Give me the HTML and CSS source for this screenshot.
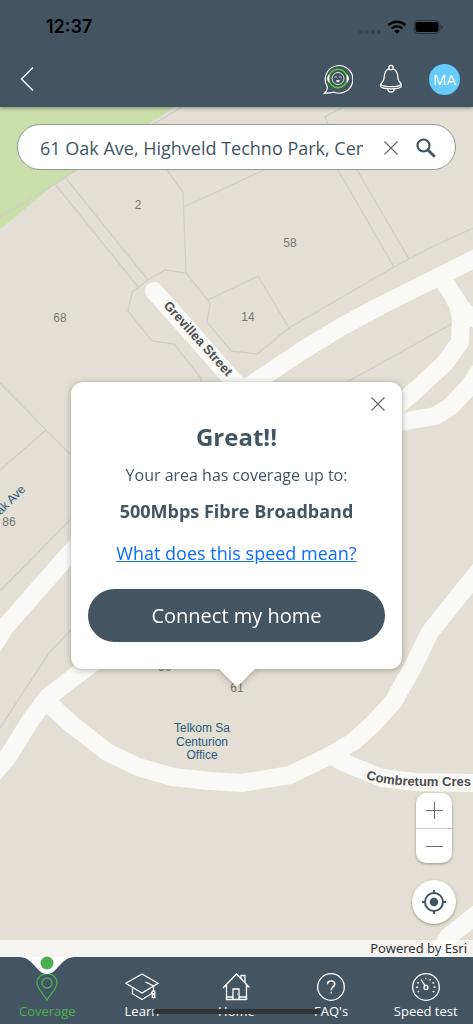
FILE: index.html
```html
<!DOCTYPE html>
<html lang="en">
<head>
    <meta charset="UTF-8">
    <meta name="viewport" content="width=device-width, initial-scale=1.0">
    <title>Coverage</title>
    <link rel="stylesheet" href="styles.css">
</head>
<body>
    <header class="header">
        <div class="status-bar">
            <span class="clock">12:37</span>
            <svg class="status-icons" width="84" height="16" viewBox="0 0 84 16">
                <g fill="#364551">
                    <circle cx="2" cy="13" r="2"/><circle cx="8" cy="13" r="2"/>
                    <circle cx="14" cy="13" r="2"/><circle cx="20" cy="13" r="2"/>
                </g>
                <g fill="none" stroke="#000" stroke-width="2.4">
                    <path d="M29.5 6.2a12.2 12.2 0 0 1 17 0"/>
                    <path d="M32.7 9.5a7.6 7.6 0 0 1 10.6 0"/>
                </g>
                <path d="M35.2 11.9a4.2 4.2 0 0 1 5.6 0L38 14.8z"/>
                <rect x="55" y="1.5" width="26" height="13" rx="4" fill="none" stroke="#2b3740"/>
                <rect x="56.500" y="3" width="23" height="10" rx="2.500"/>
                <path d="M82.300 6v4.500q1.500-.6 1.500-2.200T82.300 6z" fill="#2b3740"/>
            </svg>
        </div>
        <nav class="nav-bar">
            <button class="icon-btn back" aria-label="Back">
                <svg width="14" height="26" viewBox="0 0 14 26" fill="none" stroke="#fff" stroke-width="1.300"><path d="M13 1.500 1.500 13 13 24.500"/></svg>
            </button>
            <button class="icon-btn" aria-label="Chat">
                <svg width="30" height="32" viewBox="0 0 30 32" fill="none" stroke="#fff" stroke-width="1.200">
                    <path d="M4.300 23.600A13.800 13.800 0 1 1 11 29.200Q7 30 1.500 30.300 5 27 4.300 23.600z"/>
                    <circle cx="15" cy="15.500" r="9.200" stroke="#5bd12b" stroke-width="1.500"/>
                    <circle cx="15" cy="15.500" r="6" stroke-width=".8"/>
                    <path d="M5.600 12.700q-1.800 2.800 0 5.600zM24.400 12.700q1.800 2.800 0 5.600z" fill="#fff"/>
                    <path d="M11.500 14.300q1.200-1 2.400 0M16.100 14.300q1.200-1 2.400 0" stroke-width=".7"/>
                    <path d="M13 17.300h4q-.4 2-2 2t-2-2z" fill="#fff" stroke="none"/>
                </svg>
            </button>
            <button class="icon-btn" aria-label="Notifications">
                <svg width="24" height="30" viewBox="0 0 24 30" fill="none" stroke="#fff" stroke-width="1.300">
                    <circle cx="12" cy="3.500" r="2.200"/>
                    <path d="M9.800 4.900C5.500 6 5.300 11 5 14.500 4.700 18 1.500 18.500 1.500 21.500c0 4.500 21 4.500 21 0 0-3-3.200-3.500-3.500-7-.3-3.500-.5-8.500-4.800-9.600"/>
                    <path d="M2 20.300c2 3.200 18 3.200 20 0M8.800 25c.3 4.200 6.100 4.200 6.400 0"/>
                </svg>
            </button>
            <button class="avatar">MA</button>
        </nav>
    </header>

    <main class="map">
        <svg class="map-canvas" viewBox="0 107 473 850" preserveAspectRatio="xMidYMid slice">
            <path class="park" d="M-2 105H178L152 122 75 171 55 184-2 231z"/>
            <!-- parcel boundaries -->
            <g class="parcels">
                <path d="M0 217 55 184 75 171 182 107"/>
                <path d="M55 184 138 287M65 177 148 280"/>
                <path d="M160 160 167 170 183 192 186 273M184 207 262 171 290 158"/>
                <path d="M148 280 165 270 186 273 210 303 207 322 231 351 257 354 289 328 394 267 430 248 473 228"/>
                <path d="M208 300 258 276 289 328"/>
                <path d="M148 280 132 292 128 311 152 341 174 344 201 378 200 390"/>
                <path d="M343 107 325 117 328 124 338 170 394 267M349 155 357 170 409 259"/>
                <path d="M0 383 46 430 90 474M46 430 0 470M71 519 0 591M71 630 49 653 0 728"/>
                <path d="M340 386 473 312"/>
            </g>
            <g class="roads">
                <path d="M154 291 240 388"/>
                <path d="M-6 645 5 627 71 552 200 420 260 379 300 352 341 327 380 306 430 281 480 256"/>
                <path d="M445 283 457 301 461 318 460 342 445 363 417 389 395 408"/>
                <path d="M455 300 466 313 482 323M484 365 468 388 450 407 435 416 395 423"/>
                <path d="M482 567 430 632 413 667 393 702 373 724 353 742 327 757 290 775 242 783 210 781 173 777 138 767 107 752 70 723 46 701"/>
                <path d="M-6 773 7 758 32 718 48 697 83 670 110 650"/>
                <path d="M330 755 345 763 382 778 415 782 480 783"/>
                <path d="M482 910 448 937 434 960"/>
            </g>
            <g class="numbers">
                <text x="138" y="209">2</text>
                <text x="290" y="247">58</text>
                <text x="248" y="321">14</text>
                <text x="60" y="322">68</text>
                <text x="9" y="526">86</text>
                <text x="165" y="671">59</text>
                <text x="237" y="692">61</text>
            </g>
            <g class="places">
                <text x="202" y="732">Telkom Sa</text>
                <text x="202" y="746">Centurion</text>
                <text x="202" y="759">Office</text>
                <text class="place-end" transform="translate(26 490) rotate(-45)">Oak Ave</text>
            </g>
            <path id="grevillea" d="M163 306 242 394" fill="none"/>
            <path id="combretum" d="M366 779Q386 785 416 786L500 786" fill="none"/>
            <g class="streets">
                <text><textPath href="#grevillea">Grevillea Street</textPath></text>
                <text><textPath href="#combretum">Combretum Cres</textPath></text>
            </g>
        </svg>

        <form class="search">
            <input class="search-input" type="text" aria-label="Address" value="61 Oak Ave, Highveld Techno Park, Centurion">
            <button class="icon-btn search-btn" type="reset" aria-label="Clear">
                <svg width="14" height="14" viewBox="0 0 14 14" stroke="#666" stroke-width="1.100"><path d="M.5.5l13 13M13.500.5l-13 13"/></svg>
            </button>
            <button class="icon-btn search-btn" type="submit" aria-label="Search">
                <svg width="20" height="20" viewBox="0 0 20 20" fill="none" stroke="#435563"><circle cx="7.500" cy="7.500" r="6" stroke-width="2.200"/><path d="M12 12l6.800 6.800" stroke-width="2.800"/></svg>
            </button>
        </form>

        <section class="popup">
            <button class="icon-btn popup-close" aria-label="Close">
                <svg width="14" height="14" viewBox="0 0 14 14" stroke="#666" stroke-width="1.100"><path d="M.5.5l13 13M13.500.5l-13 13"/></svg>
            </button>
            <h1 class="popup-title">Great!!</h1>
            <p class="popup-text">Your area has coverage up to:</p>
            <p class="popup-speed">500Mbps Fibre Broadband</p>
            <a class="popup-link" href="#">What does this speed mean?</a>
            <button class="connect">Connect my home</button>
        </section>

        <div class="controls">
            <div class="zoom">
                <button class="icon-btn zoom-btn" aria-label="Zoom in">
                    <svg width="17" height="17" viewBox="0 0 17 17" stroke="#6e6e6e"><path d="M0 8.500h17M8.500 0v17"/></svg>
                </button>
                <button class="icon-btn zoom-btn" aria-label="Zoom out">
                    <svg width="17" height="17" viewBox="0 0 17 17" stroke="#6e6e6e"><path d="M0 8.500h17"/></svg>
                </button>
            </div>
            <button class="icon-btn locate" aria-label="My location">
                <svg width="24" height="24" viewBox="0 0 24 24" fill="none" stroke="#435563" stroke-width="2">
                    <circle cx="12" cy="12" r="9"/><circle cx="12" cy="12" r="4.300" fill="#435563" stroke="none"/>
                    <path d="M12 0v4M12 20v4M0 12h4M20 12h4"/>
                </svg>
            </button>
        </div>
        <div class="attribution">Powered by Esri</div>
    </main>

    <nav class="tabs">
        <a class="tab active" href="#">
            <svg class="notch" width="56" height="24" viewBox="0 0 56 24">
                <path d="M0 6H56C41 6 39 23 28 23S15 6 0 6z" fill="#fff"/>
                <circle cx="28" cy="12" r="6.500" fill="#4caf50"/>
            </svg>
            <svg class="tab-icon" width="34" height="28" viewBox="0 0 34 28">
                <path d="M17 27C13 20 7 15.500 7 10a10 9.500 0 0 1 20 0c0 5.500-6 10-10 17z"/><circle cx="17" cy="10" r="5"/>
            </svg>
            Coverage
        </a>
        <a class="tab" href="#">
            <svg class="tab-icon" width="34" height="28" viewBox="0 0 34 28">
                <path d="M17 1 .8 10.300 17 20 33 10.300z"/>
                <path d="M7.500 14.500v6.200L17 26.500l9.500-5.800v-1.500M20.500 9l8 4v5.500"/>
                <circle cx="28.500" cy="19.500" r="1.500"/><path d="M27.300 21.500h2.500v3h-2.500z"/>
            </svg>
            Learn
        </a>
        <a class="tab" href="#">
            <svg class="tab-icon" width="34" height="28" viewBox="0 0 34 28">
                <path d="M4 15 17.500 1 30.500 14.500M7.500 11.500v15h20v-15M22 5.500V2.500h4v7M14 26V16h6v10M7.500 24H14M20 24h7.500M18.300 21h.5"/>
            </svg>
            Home
        </a>
        <a class="tab" href="#">
            <svg class="tab-icon" width="34" height="28" viewBox="0 0 34 28">
                <circle cx="17" cy="14" r="13.300"/>
                <path d="M13.500 11.300c0-4.500 7.200-4.300 7.200-.2 0 3-3.500 2.700-3.500 6.200M17.200 18.800v1.600" stroke-width="1.600"/>
            </svg>
            FAQ's
        </a>
        <a class="tab" href="#">
            <svg class="tab-icon" width="34" height="28" viewBox="0 0 34 28">
                <circle cx="17" cy="14" r="13.300"/><circle cx="17" cy="14.500" r="2"/>
                <path d="M16 12.700 12 6.500"/>
                <path d="M9.800 19.200A9 9 0 0 1 9.500 9M16 5.500a9 9 0 0 1 8.200 13.700" stroke-width="1.700" stroke-dasharray="1.500 3"/>
            </svg>
            Speed test
        </a>
        <div class="home-indicator"></div>
    </nav>
</body>
</html>
```
FILE: styles.css
```css
* {
    box-sizing: border-box;
}

body {
    margin: 0;
    min-height: 100vh;
    display: flex;
    flex-direction: column;
    background: #e3dfd4;
    color: #435563;
    font-family: "Open Sans", "Noto Sans", sans-serif;
}

button, input {
    font: inherit;
    color: inherit;
    border: 0;
    padding: 0;
    background: none;
}

.icon-btn {
    display: flex;
    align-items: center;
    justify-content: center;
    cursor: pointer;
}

/* Header */
.header {
    position: relative;
    z-index: 1;
    background: #435563;
    padding-bottom: 3px;
    box-shadow: 0 1px 4px rgba(0, 0, 0, 0.4);
}

.status-bar {
    display: flex;
    align-items: center;
    justify-content: space-between;
    height: 54px;
    padding: 0 30px 0 46px;
}

.clock {
    color: #000;
    font: 600 18px/24px Inter, sans-serif;
}

.nav-bar {
    display: flex;
    align-items: center;
    height: 50px;
    gap: 26px;
    padding: 0 13px 0 20px;
}

.back {
    margin-right: auto;
}

.avatar {
    width: 31px;
    height: 31px;
    border-radius: 50%;
    background: #66ccff;
    color: #fff;
    font-size: 15px;
}

/* Map */
.map {
    position: relative;
    flex: 1;
    display: flex;
    flex-direction: column;
    padding: 17px 17px 0;
}

.map-canvas {
    position: absolute;
    inset: 0;
    width: 100%;
    height: 100%;
}

.park {
    fill: #c9dea9;
}

.parcels {
    fill: none;
    stroke: #cecdcb;
    stroke-width: 1.3;
}

.roads {
    fill: none;
    stroke: #f9f9f7;
    stroke-width: 18;
    stroke-linecap: round;
    stroke-linejoin: round;
}

.numbers, .places, .streets {
    font-family: "Liberation Sans", Arial, sans-serif;
    font-size: 12px;
    text-anchor: middle;
}

.numbers {
    fill: #777;
}

.places {
    fill: #2c5a7c;
}

.place-end {
    text-anchor: end;
}

.streets {
    fill: #4d4d4d;
    font-size: 13px;
    font-weight: bold;
    text-anchor: start;
}

/* Search */
.search {
    position: relative;
    display: flex;
    align-items: center;
    height: 46px;
    padding: 1px 12px 0 22px;
    background: #fff;
    border: 1px solid #8f9c9c;
    border-radius: 23px;
}

.search-input {
    flex: 1;
    min-width: 0;
    margin-right: 10px;
    height: 32px;
    font-size: 18px;
    outline: 0;
}

.search-btn {
    width: 35px;
    height: 36px;
}

/* Popup anchored to the searched address */
.popup {
    position: absolute;
    top: 275px;
    left: 15%;
    right: 15%;
    display: flex;
    flex-direction: column;
    align-items: center;
    padding: 39px 17px 27px;
    background: #fff;
    border-radius: 12px;
    text-align: center;
    filter: drop-shadow(0 1px 3px rgba(0, 0, 0, 0.3));
}

.popup::after {
    content: "";
    position: absolute;
    top: 100%;
    border: 18px solid transparent;
    border-top-color: #fff;
    border-bottom: 0;
}

.popup-close {
    position: absolute;
    top: 10px;
    right: 12px;
    width: 24px;
    height: 24px;
}

.popup-title {
    margin: 0 0 10px;
    font-size: 24px;
    line-height: 32px;
}

.popup-text {
    margin: 0 0 12px;
    font-size: 16px;
    line-height: 24px;
}

.popup-speed {
    margin: 0 0 18px;
    font-size: 18px;
    font-weight: 700;
    line-height: 24px;
}

.popup-link {
    margin-bottom: 24px;
    color: #0d6efd;
    font-size: 18px;
    line-height: 24px;
}

.connect {
    width: 100%;
    height: 53px;
    border-radius: 27px;
    background: #435563;
    color: #fff;
    font-size: 20px;
}

/* Map controls */
.controls {
    position: relative;
    display: flex;
    flex-direction: column;
    align-items: center;
    gap: 17px;
    margin: auto 0 16px auto;
    width: 44px;
}

.zoom, .locate {
    background: #fff;
    box-shadow: 0 1px 3px rgba(0, 0, 0, 0.35);
}

.zoom {
    width: 36px;
    border-radius: 10px;
}

.zoom-btn {
    width: 100%;
    height: 35px;
}

.zoom-btn + .zoom-btn {
    border-top: 1px solid #c8cccc;
}

.locate {
    width: 44px;
    height: 44px;
    border-radius: 50%;
}

.attribution {
    position: relative;
    margin: 0 -17px;
    padding-right: 6px;
    background: rgba(255, 255, 255, 0.66);
    color: #323232;
    font: 13px/17px "Noto Sans", sans-serif;
    text-align: right;
}

/* Bottom tabs */
.tabs {
    position: relative;
    display: grid;
    grid-template-columns: repeat(5, 1fr);
    height: 67px;
    background: #435563;
}

.tab {
    position: relative;
    display: flex;
    flex-direction: column;
    align-items: center;
    padding-top: 16px;
    color: #fff;
    font-size: 13px;
    line-height: 20px;
    text-decoration: none;
}

.tab.active {
    color: #4caf50;
}

.tab-icon {
    fill: none;
    stroke: currentColor;
    stroke-width: 1.3;
}

.notch {
    position: absolute;
    top: -6px;
}

.home-indicator {
    position: absolute;
    left: 50%;
    bottom: 10px;
    width: 168px;
    height: 5px;
    margin-left: -84px;
    border-radius: 3px;
    background: #333;
}
```
